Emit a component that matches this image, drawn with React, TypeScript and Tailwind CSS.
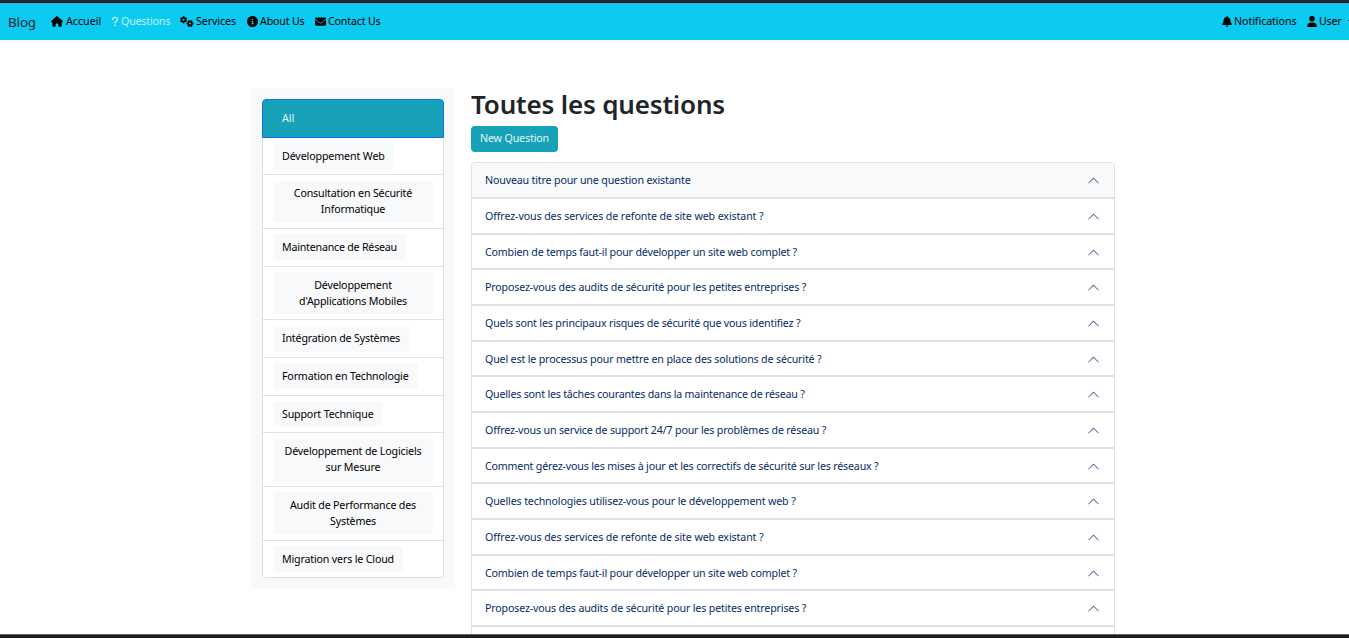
import type { ReactNode } from "react";
import {
  FaBell,
  FaCircleInfo,
  FaEnvelope,
  FaGears,
  FaHouse,
  FaQuestion,
  FaUser,
} from "react-icons/fa6";

interface Category {
  name: string;
  row: string;
  text: string;
}

const categories: Category[] = [
  { name: "Développement Web", row: "h-[37px] pt-[5px]", text: "py-[5px] tracking-[-0.12px]" },
  { name: "Consultation en Sécurité Informatique", row: "h-[54px] pt-[6px]", text: "pt-1 pb-[6px] tracking-[-0.17px]" },
  { name: "Maintenance de Réseau", row: "h-[38px] pt-[5px]", text: "py-[5px] tracking-[-0.217px]" },
  { name: "Développement d'Applications Mobiles", row: "h-[53px] pt-[5px]", text: "py-[5px] tracking-[-0.16px]" },
  { name: "Intégration de Systèmes", row: "h-[38px] pt-[6px]", text: "pt-1 pb-[6px] tracking-[-0.167px]" },
  { name: "Formation en Technologie", row: "h-[38px] pt-[5px]", text: "py-[5px] tracking-[-0.168px]" },
  { name: "Support Technique", row: "h-[37px] pt-[5px]", text: "py-[5px] tracking-[-0.17px]" },
  { name: "Développement de Logiciels sur Mesure", row: "h-[54px] pt-[6px]", text: "pt-1 pb-[6px] tracking-[-0.15px]" },
  { name: "Audit de Performance des Systèmes", row: "h-[54px] pt-[5px]", text: "py-[5px] tracking-[-0.17px]" },
  { name: "Migration vers le Cloud", row: "h-[37px] pt-[5px]", text: "py-[5px] tracking-[-0.167px]" },
];

interface Question {
  title: string;
  row: string;
  text: string;
}

const questions: Question[] = [
  { title: "Nouveau titre pour une question existante", row: "h-9", text: "tracking-[-0.164px]" },
  { title: "Offrez-vous des services de refonte de site web existant ?", row: "h-9", text: "tracking-[-0.111px]" },
  { title: "Combien de temps faut-il pour développer un site web complet ?", row: "h-[35px]", text: "tracking-[-0.184px]" },
  { title: "Proposez-vous des audits de sécurité pour les petites entreprises ?", row: "h-9", text: "tracking-[-0.162px]" },
  { title: "Quels sont les principaux risques de sécurité que vous identifiez ?", row: "h-9", text: "tracking-[-0.178px]" },
  { title: "Quel est le processus pour mettre en place des solutions de sécurité ?", row: "h-[35px]", text: "tracking-[-0.164px]" },
  { title: "Quelles sont les tâches courantes dans la maintenance de réseau ?", row: "h-9", text: "tracking-[-0.205px]" },
  { title: "Offrez-vous un service de support 24/7 pour les problèmes de réseau ?", row: "h-9", text: "tracking-[-0.17px]" },
  { title: "Comment gérez-vous les mises à jour et les correctifs de sécurité sur les réseaux ?", row: "h-[35px]", text: "tracking-[-0.184px]" },
  { title: "Quelles technologies utilisez-vous pour le développement web ?", row: "h-9", text: "tracking-[-0.145px]" },
  { title: "Offrez-vous des services de refonte de site web existant ?", row: "h-9", text: "tracking-[-0.111px]" },
  { title: "Combien de temps faut-il pour développer un site web complet ?", row: "h-[35px]", text: "tracking-[-0.184px]" },
  { title: "Proposez-vous des audits de sécurité pour les petites entreprises ?", row: "h-9", text: "tracking-[-0.162px]" },
];

function NavLink({
  icon,
  label,
  className,
}: {
  icon: ReactNode;
  label: string;
  className: string;
}) {
  return (
    <a href="#" className={`flex items-center whitespace-nowrap ${className}`}>
      {icon}
      <span className="pb-0.5">{label}</span>
    </a>
  );
}

function Navbar() {
  return (
    <nav className="flex h-[37px] shrink-0 items-center overflow-hidden bg-[#0dcaf0] pl-2 text-black">
      <a href="#" className="w-[43px] pt-px text-[13.33px] leading-5 tracking-[-0.1px] text-[#212529]">
        Blog
      </a>
      <div className="flex flex-1 items-center">
        <NavLink
          icon={<FaHouse className="mr-[3px] h-[11px] w-3" />}
          label="Accueil"
          className="w-[60px]"
        />
        <NavLink
          icon={<FaQuestion className="mr-0.5 h-[11px] w-2" />}
          label="Questions"
          className="w-[69px] tracking-[-0.19px] text-[#c4f1fb]"
        />
        <NavLink
          icon={<FaGears className="mr-0.5 h-[11px] w-[14px]" />}
          label="Services"
          className="w-[67px] tracking-[-0.08px]"
        />
        <NavLink
          icon={<FaCircleInfo className="mr-0.5 h-[11px] w-[11px]" />}
          label="About Us"
          className="w-[68px] tracking-[-0.18px]"
        />
        <NavLink
          icon={<FaEnvelope className="mr-0.5 h-[11px] w-[11px]" />}
          label="Contact Us"
          className="tracking-[-0.17px]"
        />
      </div>
      <div className="flex w-[127px] items-center">
        <NavLink
          icon={<FaBell className="mr-0.5 h-[11px] w-[10px]" />}
          label="Notifications"
          className="w-[85px] shrink-0 tracking-[-0.07px]"
        />
        <NavLink
          icon={<FaUser className="mr-0.5 h-[11px] w-[10px]" />}
          label="User"
          className="shrink-0 tracking-[-0.2px]"
        />
        <span className="ml-[6px] shrink-0 border-x-[3px] border-t-[3px] border-x-transparent border-t-black" />
      </div>
    </nav>
  );
}

function Sidebar() {
  return (
    <aside className="h-[501px] w-[204px] bg-[#f8f9fa] px-[11px] pt-[11px]">
      <ul className="overflow-hidden rounded-[4px]">
        <li className="flex h-[39px] items-center rounded-t-[4px] border border-[#0d6efd] bg-[#17a2b8] pb-0.5 pl-[19px] text-[#dff3f6]">
          All
        </li>
        {categories.map((category) => (
          <li
            key={category.name}
            className={`flex items-start border-x border-b border-[#dee2e6] bg-white px-[10px] last:rounded-b-[4px] ${category.row}`}
          >
            <button
              className={`rounded-[3px] bg-[#f8f9fa] px-[9px] text-center leading-4 text-black ${category.text}`}
            >
              {category.name}
            </button>
          </li>
        ))}
      </ul>
    </aside>
  );
}

function QuestionRow({ question }: { question: Question }) {
  return (
    <div
      className={`flex items-center justify-between border-b-2 border-[#dee2e6] bg-white pr-[14px] pl-[13px] text-[#052c65] first:bg-[#f8f9fa] ${question.row}`}
    >
      <span className={`whitespace-nowrap ${question.text}`}>{question.title}</span>
      <svg viewBox="0 0 16 16" className="mt-px size-[13px] opacity-75" fill="currentColor">
        <path
          fillRule="evenodd"
          d="M1.646 11.354a.5.5 0 0 0 .708 0L8 5.707l5.646 5.647a.5.5 0 0 0 .708-.708l-6-6a.5.5 0 0 0-.708 0l-6 6a.5.5 0 0 0 0 .708z"
        />
      </svg>
    </div>
  );
}

export default function App() {
  return (
    <div className="flex h-[638px] w-full flex-col overflow-hidden bg-white font-['Noto_Sans',sans-serif] text-[10.667px] leading-4">
      <div className="h-[3px] shrink-0 border-b border-[#101010] bg-[#2b2b2f]" />
      <Navbar />
      <main className="flex min-h-0 flex-1 items-start gap-4 overflow-hidden pt-12 pl-[251px]">
        <Sidebar />
        <section className="flex w-[644px] flex-col items-start">
          <h1 className="h-[38px] text-[26px] leading-[33px] font-semibold tracking-[-0.17px] whitespace-nowrap text-[#212529]">
            Toutes les questions
          </h1>
          <button className="h-[26px] rounded-[4px] bg-[#17a2b8] px-[9px] pb-[3px] tracking-[-0.142px] text-[#e3f4f7]">
            New Question
          </button>
          <div className="mt-[10px] h-[500px] w-full overflow-hidden rounded-t-[4px] border border-[#dee2e6]">
            {questions.map((question, index) => (
              <QuestionRow key={index} question={question} />
            ))}
          </div>
        </section>
      </main>
      <div className="h-1 shrink-0 border-t border-[#666666] bg-[#1c1c1c]" />
    </div>
  );
}
